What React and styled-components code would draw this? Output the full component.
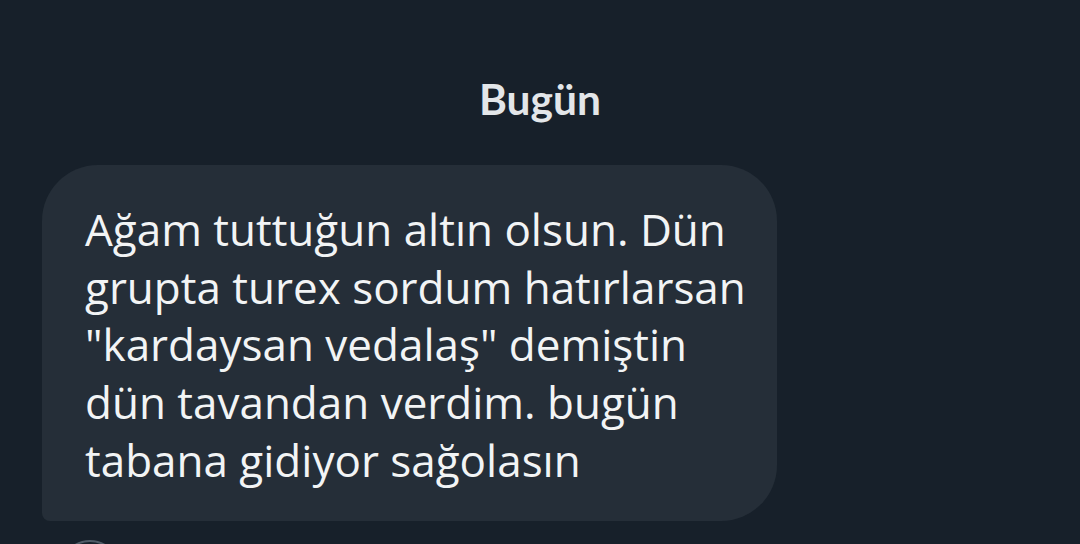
import React from "react";
import styled, { createGlobalStyle } from "styled-components";

const Global = createGlobalStyle`
  html, body {
    margin: 0;
    padding: 0;
    background: #17202a;
    height: 544px;
    overflow: hidden;
  }
  * { box-sizing: border-box; }
`;

const Screen = styled.div`
  width: 1080px;
  height: 544px;
  background: #17202a;
  display: flex;
  flex-direction: column;
  overflow: hidden;
`;

const DayLabel = styled.div`
  align-self: center;
  margin-top: 76px;
  font-family: Lato, "Noto Sans", sans-serif;
  font-weight: 700;
  font-size: 42.5px;
  line-height: 46px;
  color: #e3e6e9;
`;

const Thread = styled.div`
  display: flex;
  flex-direction: column;
  align-items: flex-start;
  padding-left: 42px;
  margin-top: 43px;
`;

const Bubble = styled.div`
  width: 735px;
  height: 356px;
  background: #252e38;
  border-radius: 56px 56px 56px 8px;
  padding: 36px 20px 0 43px;
  font-family: "Open Sans", "Noto Sans", sans-serif;
  font-size: 44px;
  line-height: 57.7px;
  color: #f2f4f5;
  white-space: pre-line;
`;

const RoundButton = styled.div`
  margin-top: 19px;
  margin-left: 18px;
  width: 60px;
  height: 60px;
  border-radius: 50%;
  border: 2px solid #4f5b67;
`;

const lines = [
  "Ağam tuttuğun altın olsun. Dün",
  "grupta turex sordum hatırlarsan",
  "\"kardaysan vedalaş\" demiştin",
  "dün tavandan verdim. bugün",
  "tabana gidiyor sağolasın",
];

export default function App() {
  return (
    <Screen>
      <Global />
      <DayLabel>Bugün</DayLabel>
      <Thread>
        <Bubble>{lines.join("\n")}</Bubble>
        <RoundButton />
      </Thread>
    </Screen>
  );
}
